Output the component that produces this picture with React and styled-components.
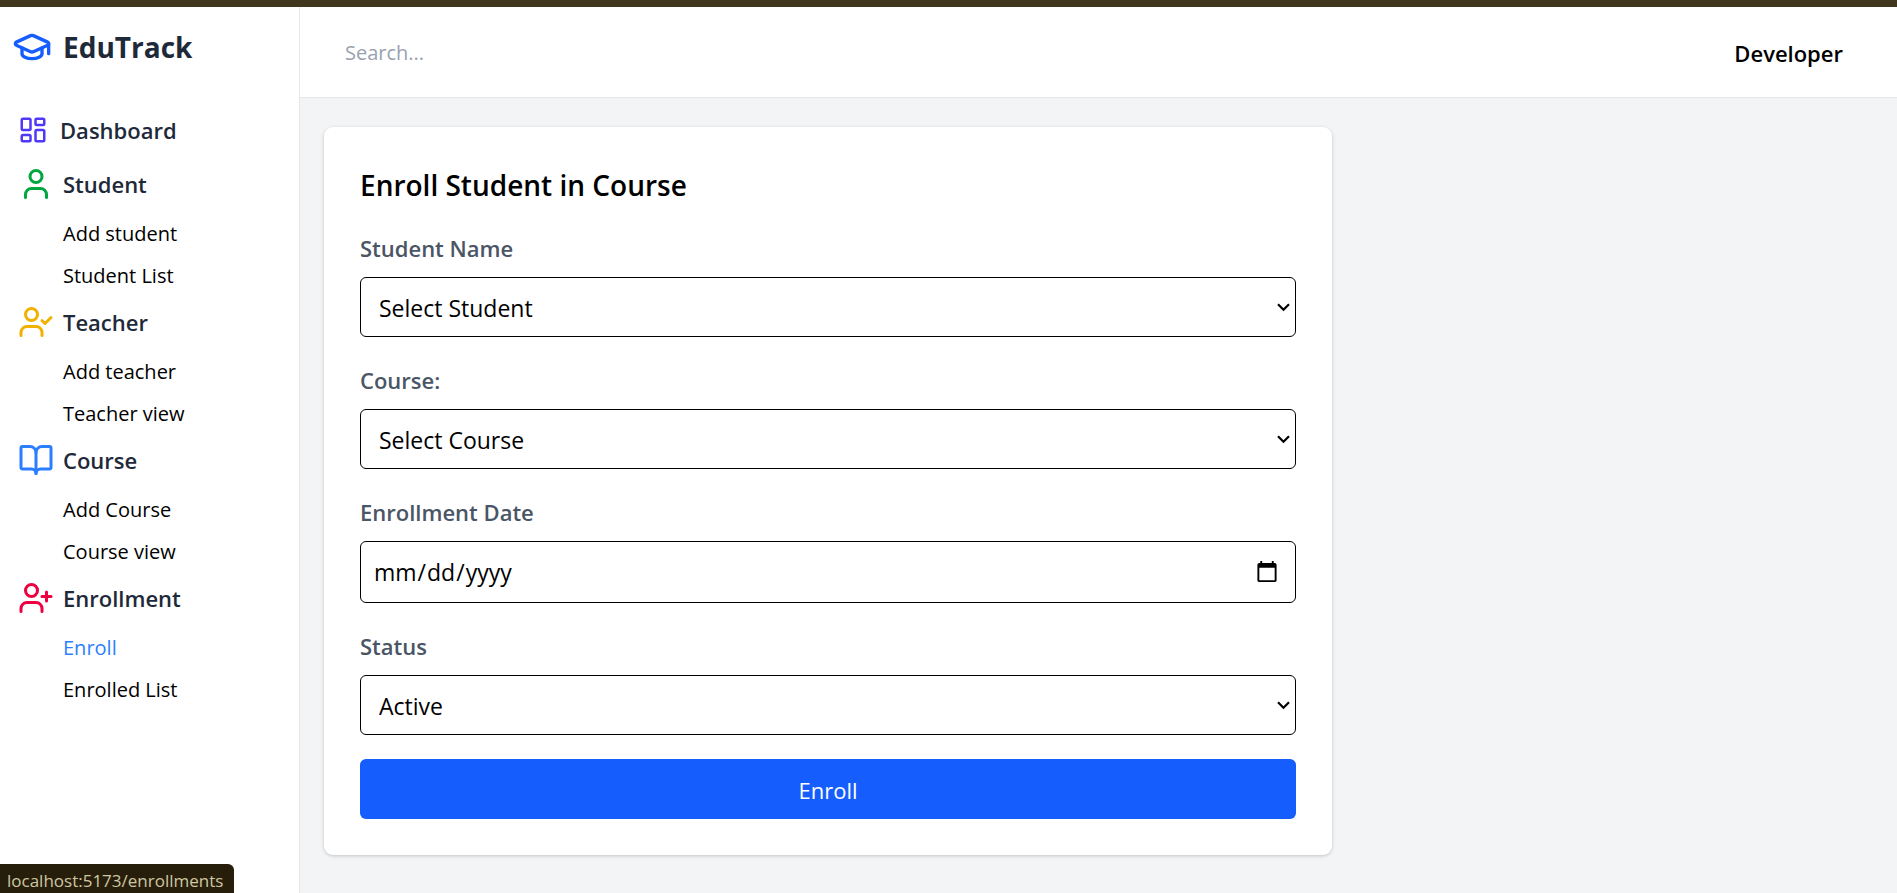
import React from "react";
import styled, { createGlobalStyle } from "styled-components";
import {
  GraduationCap,
  LayoutDashboard,
  User,
  UserCheck,
  BookOpen,
  UserPlus,
} from "lucide-react";

const GlobalStyle = createGlobalStyle`
  *, *::before, *::after { box-sizing: border-box; }
  body {
    margin: 0;
    background: #f3f4f6;
    color: #000;
    font-family: "Segoe UI", "Open Sans", "Noto Sans", sans-serif;
    font-size: 22px;
    line-height: 36px;
  }
  input, select, button { font: inherit; color: inherit; }
  a { color: inherit; text-decoration: none; }
`;

const Page = styled.div`
  min-height: 100vh;
  display: flex;
  flex-direction: column;
`;

const TopStrip = styled.div`
  height: 7px;
  background: #41371f;
`;

const Body = styled.div`
  flex: 1;
  display: flex;
`;

const Sidebar = styled.aside`
  flex: 0 0 300px;
  background: #fff;
  border-right: 1px solid #e5e7eb;
`;

const Brand = styled.div`
  display: flex;
  align-items: center;
  gap: 11px;
  height: 80px;
  padding-left: 12px;
  margin-bottom: 16px;
  color: #1e2939;
  font-size: 28px;
  font-weight: 700;

  svg { color: #155dfc; }
`;

const NavGroup = styled.div`
  display: flex;
  flex-direction: column;
`;

const NavHeading = styled.a`
  display: flex;
  align-items: center;
  gap: ${(p) => (p.$wide ? 12 : 9)}px;
  height: 54px;
  padding-left: 18px;
  color: #1e2939;
  font-weight: 600;
  line-height: 54px;

  svg { color: ${(p) => p.$tint}; }
`;

const NavLink = styled.a`
  height: 42px;
  padding-left: 63px;
  font-size: 20px;
  line-height: 46px;
  color: ${(p) => (p.$active ? "#2b7fff" : "#000")};
`;

const Main = styled.div`
  flex: 1;
  min-width: 0;
`;

const Header = styled.header`
  display: flex;
  align-items: center;
  justify-content: space-between;
  height: 91px;
  padding: 2px 54px 0 45px;
  background: #fff;
  border-bottom: 1px solid #e5e7eb;
`;

const SearchInput = styled.input`
  width: 380px;
  padding: 0;
  border: 0;
  outline: 0;
  background: transparent;
  font-size: 20px;

  &::placeholder { color: #99a1af; opacity: 1; }
`;

const UserName = styled.span`
  font-weight: 600;
`;

const Content = styled.main`
  padding: 29px 24px;
`;

const Card = styled.form`
  max-width: 1008px;
  padding: 36px;
  background: #fff;
  border-radius: 9px;
  box-shadow: 0 1px 4px rgba(0, 0, 0, 0.1), 0 1px 3px rgba(0, 0, 0, 0.1);
`;

const Title = styled.h2`
  margin: 0 0 22px;
  font-size: 28px;
  line-height: 44px;
  font-weight: 600;
`;

const Field = styled.div`
  display: flex;
  flex-direction: column;
  gap: 10px;
  margin-bottom: 24px;
`;

const Label = styled.label`
  color: #4a5565;
  font-weight: 600;
  line-height: 38px;
`;

const SelectBox = styled.div`
  position: relative;

  svg {
    position: absolute;
    right: 6px;
    top: 50%;
    margin-top: -4px;
    pointer-events: none;
  }
`;

const Select = styled.select`
  display: block;
  width: 100%;
  height: 60px;
  padding: 2px 36px 0 18px;
  border: 1px solid #000;
  border-radius: 6px;
  background: #fff;
  font-size: 23px;
  appearance: none;
`;

const DateInput = styled.input`
  display: block;
  width: 100%;
  height: 62px;
  padding: 0 14px 0 12px;
  border: 1px solid #000;
  border-radius: 6px;
  background: #fff;
  font-size: 23px;

  &::-webkit-calendar-picker-indicator {
    width: 24px;
    height: 24px;
  }
`;

const SubmitButton = styled.button`
  display: block;
  width: 100%;
  height: 60px;
  padding: 2px 0 0;
  border: 0;
  border-radius: 6px;
  background: #155dfc;
  color: #fff;
  cursor: pointer;
`;

const StatusBubble = styled.div`
  position: fixed;
  left: 0;
  bottom: 0;
  height: 29px;
  padding: 0 11px 0 7px;
  border-top-right-radius: 6px;
  background: #261e0a;
  color: #cfc6a2;
  font-size: 17px;
  line-height: 34px;
`;

const groups = [
  { title: "Student", icon: User, tint: "#00a63e", links: ["Add student", "Student List"] },
  { title: "Teacher", icon: UserCheck, tint: "#f0b100", links: ["Add teacher", "Teacher view"] },
  { title: "Course", icon: BookOpen, tint: "#2b7fff", links: ["Add Course", "Course view"] },
  { title: "Enrollment", icon: UserPlus, tint: "#ec003f", links: ["Enroll", "Enrolled List"] },
];

function SelectField({ id, label, option }) {
  return (
    <Field>
      <Label htmlFor={id}>{label}</Label>
      <SelectBox>
        <Select id={id}>
          <option>{option}</option>
        </Select>
        <svg width="13" height="9" viewBox="0 0 13 9" fill="none" aria-hidden="true">
          <path d="M1 1.2 6.5 6.8 12 1.2" stroke="#000" strokeWidth="2.2" />
        </svg>
      </SelectBox>
    </Field>
  );
}

export default function App() {
  return (
    <Page>
      <GlobalStyle />
      <TopStrip />
      <Body>
        <Sidebar>
          <Brand>
            <GraduationCap size={40} />
            EduTrack
          </Brand>
          <nav>
            <NavHeading href="#dashboard" $wide $tint="#4f39f6">
              <LayoutDashboard size={30} />
              Dashboard
            </NavHeading>
            {groups.map(({ title, icon: Icon, tint, links }) => (
              <NavGroup key={title}>
                <NavHeading href={`#${title}`} $tint={tint}>
                  <Icon size={36} />
                  {title}
                </NavHeading>
                {links.map((link) => (
                  <NavLink key={link} href={`#${link}`} $active={link === "Enroll"}>
                    {link}
                  </NavLink>
                ))}
              </NavGroup>
            ))}
          </nav>
        </Sidebar>
        <Main>
          <Header>
            <SearchInput type="text" placeholder="Search..." aria-label="Search" />
            <UserName>Developer</UserName>
          </Header>
          <Content>
            <Card onSubmit={(e) => e.preventDefault()}>
              <Title>Enroll Student in Course</Title>
              <SelectField id="student" label="Student Name" option="Select Student" />
              <SelectField id="course" label="Course:" option="Select Course" />
              <Field>
                <Label htmlFor="date">Enrollment Date</Label>
                <DateInput id="date" type="date" />
              </Field>
              <SelectField id="status" label="Status" option="Active" />
              <SubmitButton type="submit">Enroll</SubmitButton>
            </Card>
          </Content>
        </Main>
      </Body>
      <StatusBubble>localhost:5173/enrollments</StatusBubble>
    </Page>
  );
}
